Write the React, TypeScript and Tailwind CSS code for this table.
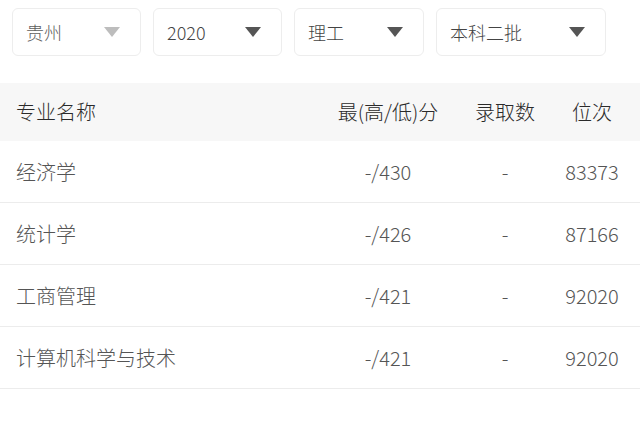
import React from "react";

const Tri = ({ light }: { light?: boolean }) => (
  <svg width="16" height="10" viewBox="0 0 16 10" className="shrink-0">
    <polygon points="0,0 16,0 8,10" fill={light ? "#bdbdbd" : "#555555"} />
  </svg>
);

const selects = [
  { label: "贵州", w: "w-[129px]", light: true },
  { label: "2020", w: "w-[129px]" },
  { label: "理工", w: "w-[130px]" },
  { label: "本科二批", w: "w-[170px]" },
];

const rows = [
  ["经济学", "-/430", "-", "83373"],
  ["统计学", "-/426", "-", "87166"],
  ["工商管理", "-/421", "-", "92020"],
  ["计算机科学与技术", "-/421", "-", "92020"],
];

export default function App() {
  return (
    <div
      className="w-[640px] h-[429px] bg-white overflow-hidden font-light"
      style={{ fontFamily: '"Noto Sans CJK SC", "Noto Sans", sans-serif' }}
    >
      <div className="flex gap-3 px-3 pt-2">
        {selects.map((s) => (
          <div
            key={s.label}
            className={`${s.w} h-[48px] border border-[#ededed] rounded-md flex items-center justify-between pl-[13px] pr-[20px]`}
          >
            <span className={`text-[18px] ${s.light ? "text-[#5e5e5e]" : "text-[#444]"}`}>{s.label}</span>
            <Tri light={s.light} />
          </div>
        ))}
      </div>
      <div className="mt-[27px]">
        <div className="grid grid-cols-[1fr_124px_110px_64px] items-center h-[58px] bg-[#f7f7f7] px-4 text-[20px] text-[#2a2a2a]">
          <span>专业名称</span>
          <span className="text-center whitespace-nowrap">最(高/低)分</span>
          <span className="text-center">录取数</span>
          <span className="text-center">位次</span>
        </div>
        {rows.map((r, i) => (
          <div
            key={i}
            className="grid grid-cols-[1fr_124px_110px_64px] items-center h-[62px] border-b border-[#ececec] px-4 text-[20px] text-[#555]"
          >
            <span>{r[0]}</span>
            <span className="text-center">{r[1]}</span>
            <span className="text-center">{r[2]}</span>
            <span className="text-center">{r[3]}</span>
          </div>
        ))}
      </div>
    </div>
  );
}
